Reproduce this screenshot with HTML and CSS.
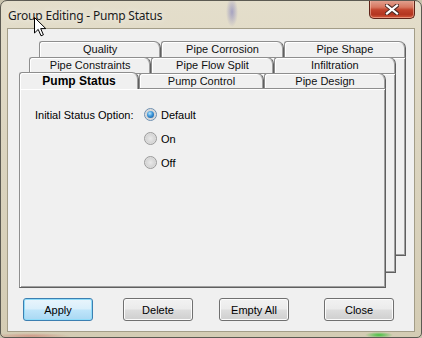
FILE: index.html
```html
<!DOCTYPE html>
<html>

<head>
  <title>Group Editing - Pump Status</title>
  <link rel="stylesheet" href="styles.css">
</head>

<body>
  <div class="window">
    <div class="titlebar">
      <span class="title">Group Editing - Pump Status</span>
      <button class="close-btn" title="Close">
        <svg width="14" height="11" viewBox="0 0 14 11">
          <path d="M2 1.5 L12 9.5 M12 1.5 L2 9.5" stroke="#4a2a24" stroke-width="4.2" stroke-linecap="square" fill="none" />
          <path d="M2 1.5 L12 9.5 M12 1.5 L2 9.5" stroke="#ffffff" stroke-width="2.2" stroke-linecap="square" fill="none" />
        </svg>
      </button>
    </div>

    <div class="client">
      <div class="tab-stack">
        <div class="tab-layer layer-back">
          <div class="tab-row">
            <div class="tab">Quality</div>
            <div class="tab">Pipe Corrosion</div>
            <div class="tab">Pipe Shape</div>
          </div>
          <div class="tab-page"></div>
        </div>

        <div class="tab-layer layer-mid">
          <div class="tab-row">
            <div class="tab">Pipe Constraints</div>
            <div class="tab">Pipe Flow Split</div>
            <div class="tab">Infiltration</div>
          </div>
          <div class="tab-page"></div>
        </div>

        <div class="tab-layer layer-front">
          <div class="tab-row">
            <div class="tab active">Pump Status</div>
            <div class="tab tab-control">Pump Control</div>
            <div class="tab tab-design">Pipe Design</div>
          </div>
          <div class="tab-page">
            <div class="option-row">
              <span class="option-label">Initial Status Option:</span>
              <div class="radio-list">
                <label class="radio"><span class="radio-dot checked"></span>Default</label>
                <label class="radio"><span class="radio-dot"></span>On</label>
                <label class="radio"><span class="radio-dot"></span>Off</label>
              </div>
            </div>
          </div>
        </div>
      </div>

      <div class="button-row">
        <button class="button default">Apply</button>
        <button class="button btn-delete">Delete</button>
        <button class="button btn-empty">Empty All</button>
        <button class="button btn-close">Close</button>
      </div>
    </div>

    <!-- mouse pointer resting on the title -->
    <svg class="cursor" width="13" height="20" viewBox="0 0 13 20">
      <path d="M0.5 0.5 L0.5 16 L4.2 12.4 L7 18.8 L9.4 17.8 L6.7 11.6 L11.8 11.6 Z" fill="#ffffff" stroke="#000000" stroke-width="1" />
    </svg>
  </div>
</body>

</html>
```

FILE: styles.css
```css
body {
  margin: 0;
  background-color: #c9c3ad;
  font-family: "Liberation Sans", Arial, sans-serif;
  font-size: 11px;
  color: #000;
}

.window {
  position: relative;
  width: 422px;
  height: 338px;
  box-sizing: border-box;
  padding: 0 6px 5px 6px;
  border: 1px solid #5c5a52;
  border-radius: 7px 7px 5px 5px;
  display: flex;
  flex-direction: column;
  background:
    radial-gradient(ellipse 6px 15px at 231px 11px, rgba(90, 90, 180, 0.45), rgba(90, 90, 180, 0) 100%),
    radial-gradient(ellipse 40px 3px at 30px 335px, rgba(200, 90, 80, 0.45), rgba(200, 90, 80, 0) 100%),
    radial-gradient(ellipse 14px 3px at 378px 334px, rgba(40, 190, 40, 0.85), rgba(40, 190, 40, 0) 100%),
    linear-gradient(to bottom, #e4decb 0%, #dcd5c0 40%, #d4ccb4 100%);
  overflow: hidden;
}

.titlebar {
  height: 27px;
  display: flex;
  align-items: flex-start;
  justify-content: space-between;
}

.title {
  margin: 7px 0 0 1px;
  font-family: "Noto Sans", "Open Sans", sans-serif;
  font-size: 12px;
  letter-spacing: -0.2px;
  line-height: 15px;
  color: #1c1c1c;
  text-shadow: 0 0 6px rgba(255, 255, 255, 0.9);
}

.close-btn {
  width: 46px;
  height: 19px;
  margin-top: -1px;
  padding: 0;
  border: 1px solid #5e2318;
  border-top: none;
  border-radius: 0 0 5px 5px;
  background: linear-gradient(to bottom, #e3a695 0%, #d77760 40%, #c1432c 55%, #b33520 80%, #d45a3c 100%);
  box-shadow: inset 0 0 0 1px rgba(255, 210, 190, 0.5);
  display: flex;
  align-items: center;
  justify-content: center;
}

.client {
  flex: 1;
  border: 1px solid #a39d88;
  background-color: #f0f0f0;
  display: flex;
  flex-direction: column;
}

.tab-stack {
  margin: 12px 0 0 11px;
  display: grid;
}

.tab-layer {
  grid-area: 1 / 1;
  width: 367px;
  display: flex;
  flex-direction: column;
}

.layer-back {
  margin-left: 20px;
}

.layer-mid {
  margin-left: 10px;
  margin-top: 16px;
}

.layer-front {
  margin-top: 31px;
}

.tab-row {
  height: 16px;
  display: flex;
  align-items: flex-end;
}

.tab {
  flex: 1;
  height: 16px;
  box-sizing: border-box;
  border: 1px solid #8e8e8e;
  border-right-color: #5f5f5f;
  border-bottom: none;
  border-radius: 3px 7px 0 0;
  background-color: #f0f0f0;
  box-shadow: inset 1px 1px 0 #ffffff, inset -1px 0 0 #a0a0a0;
  text-align: center;
  line-height: 15px;
  white-space: nowrap;
  color: #111;
}

.tab-page {
  height: 199px;
  box-sizing: border-box;
  border: 1px solid #8e8e8e;
  border-right-color: #5f5f5f;
  border-bottom-color: #5f5f5f;
  background-color: #f0f0f0;
  box-shadow: inset 1px 1px 0 #ffffff, inset -1px -1px 0 #a0a0a0;
}

.layer-mid .tab-page {
  height: 200px;
}

.layer-front .tab {
  flex: none;
  height: 15px;
  line-height: 14px;
}

.layer-front .tab.active {
  width: 120px;
  height: 17px;
  margin-bottom: -1px;
  position: relative;
  z-index: 1;
  font-weight: bold;
  font-size: 12px;
  line-height: 17px;
  color: #000;
}

.tab-control {
  width: 125px;
}

.tab-design {
  width: 122px;
}

.layer-front .tab-page {
  height: 200px;
  padding: 18px 0 0 15px;
}

.option-row {
  display: flex;
  align-items: flex-start;
}

.option-label {
  width: 109px;
  line-height: 15px;
  margin-top: 1px;
}

.radio-list {
  display: flex;
  flex-direction: column;
  gap: 9px;
}

.radio {
  display: flex;
  align-items: center;
  gap: 4px;
  height: 15px;
}

.radio-dot {
  width: 13px;
  height: 13px;
  box-sizing: border-box;
  border-radius: 50%;
  border: 1px solid #9a9a9a;
  background: radial-gradient(circle at 50% 50%, #e9e9e9 0%, #d6d6d6 55%, #f4f4f4 100%);
  display: flex;
  align-items: center;
  justify-content: center;
}

.radio-dot.checked {
  border-color: #6d8fb0;
}

.radio-dot.checked::after {
  content: "";
  width: 7px;
  height: 7px;
  border-radius: 50%;
  background: radial-gradient(circle at 40% 35%, #b9e8ff 0%, #3b94d8 45%, #0f4f93 100%);
}

.button-row {
  margin: 10px 0 0 15px;
  display: flex;
}

.button {
  width: 70px;
  height: 23px;
  box-sizing: border-box;
  border: 1px solid #707070;
  border-radius: 3px;
  background: linear-gradient(to bottom, #f2f2f2 0%, #ebebeb 48%, #dddddd 52%, #cfcfcf 100%);
  box-shadow: inset 0 0 0 1px #fbfbfb;
  font-family: "Liberation Sans", Arial, sans-serif;
  font-size: 11px;
  color: #000;
  padding: 0;
}

.button.default {
  border-color: #3c7fb1;
  background: linear-gradient(to bottom, #e9f5fc 0%, #d9effb 48%, #bfe5fa 52%, #a9d8f3 100%);
  box-shadow: inset 0 0 0 1px #8fdcf9;
}

.btn-delete {
  margin-left: 30px;
}

.btn-empty {
  margin-left: 26px;
}

.btn-close {
  margin-left: 35px;
}

.cursor {
  position: absolute;
  left: 33px;
  top: 16px;
}
```
